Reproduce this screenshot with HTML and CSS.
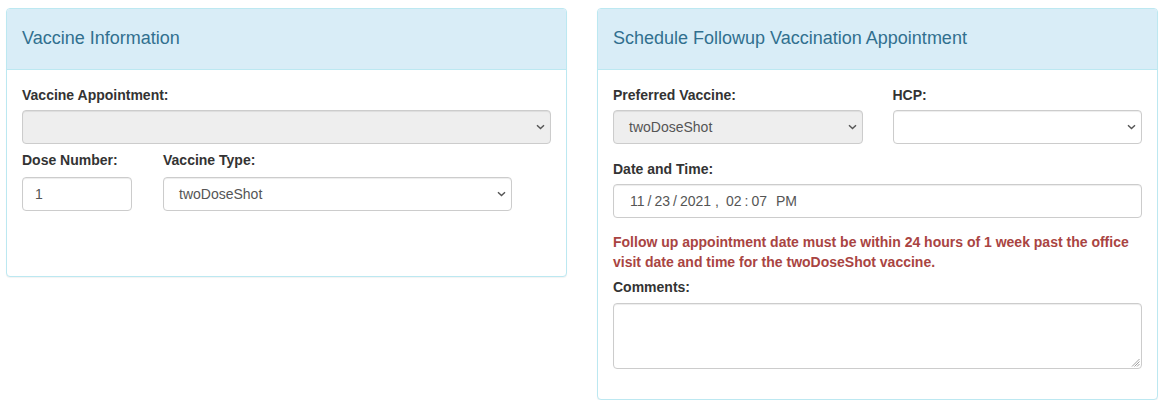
FILE: index.html
```html
<!DOCTYPE html>
<html lang="en">
<head>
<meta charset="utf-8">
<title>Vaccine Information</title>
<link rel="stylesheet" href="styles.css">
</head>
<body>
<div class="page">
  <section class="panel panel-left">
    <div class="panel-heading"><h3 class="panel-title">Vaccine Information</h3></div>
    <div class="panel-body">
      <div class="field">
        <label class="lbl">Vaccine Appointment:</label>
        <div class="control select disabled">
          <span class="val"></span>
          <svg class="chev" width="9" height="6" viewBox="0 0 9 6"><path d="M1 1.2 L4.5 4.6 L8 1.2" fill="none" stroke="#555" stroke-width="1.4"/></svg>
        </div>
      </div>
      <div class="dose-row">
        <div class="field dose">
          <label class="lbl">Dose Number:</label>
          <div class="control input"><span class="val">1</span></div>
        </div>
        <div class="field vtype">
          <label class="lbl">Vaccine Type:</label>
          <div class="control select">
            <span class="val">twoDoseShot</span>
            <svg class="chev" width="9" height="6" viewBox="0 0 9 6"><path d="M1 1.2 L4.5 4.6 L8 1.2" fill="none" stroke="#555" stroke-width="1.4"/></svg>
          </div>
        </div>
      </div>
    </div>
  </section>

  <section class="panel panel-right">
    <div class="panel-heading"><h3 class="panel-title">Schedule Followup Vaccination Appointment</h3></div>
    <div class="panel-body">
      <div class="two-col">
        <div class="field">
          <label class="lbl">Preferred Vaccine:</label>
          <div class="control select disabled">
            <span class="val">twoDoseShot</span>
            <svg class="chev" width="9" height="6" viewBox="0 0 9 6"><path d="M1 1.2 L4.5 4.6 L8 1.2" fill="none" stroke="#555" stroke-width="1.4"/></svg>
          </div>
        </div>
        <div class="field">
          <label class="lbl">HCP:</label>
          <div class="control select">
            <span class="val"></span>
            <svg class="chev" width="9" height="6" viewBox="0 0 9 6"><path d="M1 1.2 L4.5 4.6 L8 1.2" fill="none" stroke="#555" stroke-width="1.4"/></svg>
          </div>
        </div>
      </div>
      <div class="field date-group">
        <label class="lbl">Date and Time:</label>
        <div class="control input datetime"><span>11</span><span class="sep">/</span><span>23</span><span class="sep">/</span><span>2021</span><span class="comma">,</span><span class="hh">02</span><span class="sep">:</span><span>07</span><span class="ampm">PM</span></div>
      </div>
      <p class="error">Follow up appointment date must be within 24 hours of 1 week past the office visit date and time for the twoDoseShot vaccine.</p>
      <div class="field comments">
        <label class="lbl">Comments:</label>
        <div class="control textarea">
          <svg class="grip" width="9" height="9" viewBox="0 0 9 9"><path d="M8.5 1 L1 8.5 M8.5 3.5 L3.5 8.5 M8.5 6 L6 8.5" stroke="#888" stroke-width="0.8" fill="none"/></svg>
        </div>
      </div>
    </div>
  </section>
</div>
</body>
</html>
```

FILE: styles.css
```css
* { box-sizing: border-box; }

html, body {
  margin: 0;
  padding: 0;
  background: #fff;
}

body {
  font-family: "Liberation Sans", Arial, sans-serif;
  font-size: 14px;
  line-height: 20px;
  color: #333;
}

.page {
  display: flex;
  align-items: flex-start;
  gap: 30px;
  padding: 8px 0 0 6px;
}

.panel {
  width: 561px;
  border: 1px solid #bce8f1;
  border-radius: 4px;
  background: #fff;
  box-shadow: 0 1px 1px rgba(0, 0, 0, 0.05);
}

.panel-heading {
  background: #d9edf7;
  border-bottom: 1px solid #bce8f1;
  border-radius: 3px 3px 0 0;
  padding: 19px 15px 21px;
}

.panel-title {
  margin: 0;
  font-size: 18px;
  line-height: 20px;
  font-weight: normal;
  color: #31708f;
}

.panel-body {
  padding: 15px;
}

.panel-left .panel-body {
  padding-bottom: 65px;
}

.field {
  display: flex;
  flex-direction: column;
}

.lbl {
  display: block;
  font-weight: bold;
  margin-bottom: 5px;
}

.control {
  height: 34px;
  border: 1px solid #ccc;
  border-radius: 4px;
  background: #fff;
  box-shadow: inset 0 1px 1px rgba(0, 0, 0, 0.075);
  color: #555;
  display: flex;
  align-items: center;
}

.control.input {
  padding: 0 12px;
}

.control.select {
  justify-content: space-between;
  padding: 0 5px 0 15px;
}

.control.disabled {
  background: #eee;
}

.chev {
  display: block;
  flex: none;
}

.dose-row {
  display: flex;
  gap: 31px;
  margin-top: 6px;
}

.dose-row .lbl {
  margin-bottom: 7px;
}

.dose {
  width: 110px;
}

.vtype {
  width: 349px;
}

.two-col {
  display: grid;
  grid-template-columns: 1fr 1fr;
  column-gap: 30px;
}

.date-group {
  margin-top: 15px;
}

.control.datetime {
  padding-left: 16px;
}

.datetime .sep { margin: 0 3px; }
.datetime .comma { margin-left: 4px; }
.datetime .hh { margin-left: 7px; }
.datetime .ampm { margin-left: 9px; }

.error {
  margin: 14px 0 0;
  color: #a94442;
  font-weight: bold;
}

.comments {
  margin-top: 5px;
  margin-bottom: 15px;
}

.comments .lbl {
  margin-bottom: 6px;
}

.control.textarea {
  height: 66px;
  position: relative;
}

.grip {
  position: absolute;
  right: 1px;
  bottom: 1px;
}
```
